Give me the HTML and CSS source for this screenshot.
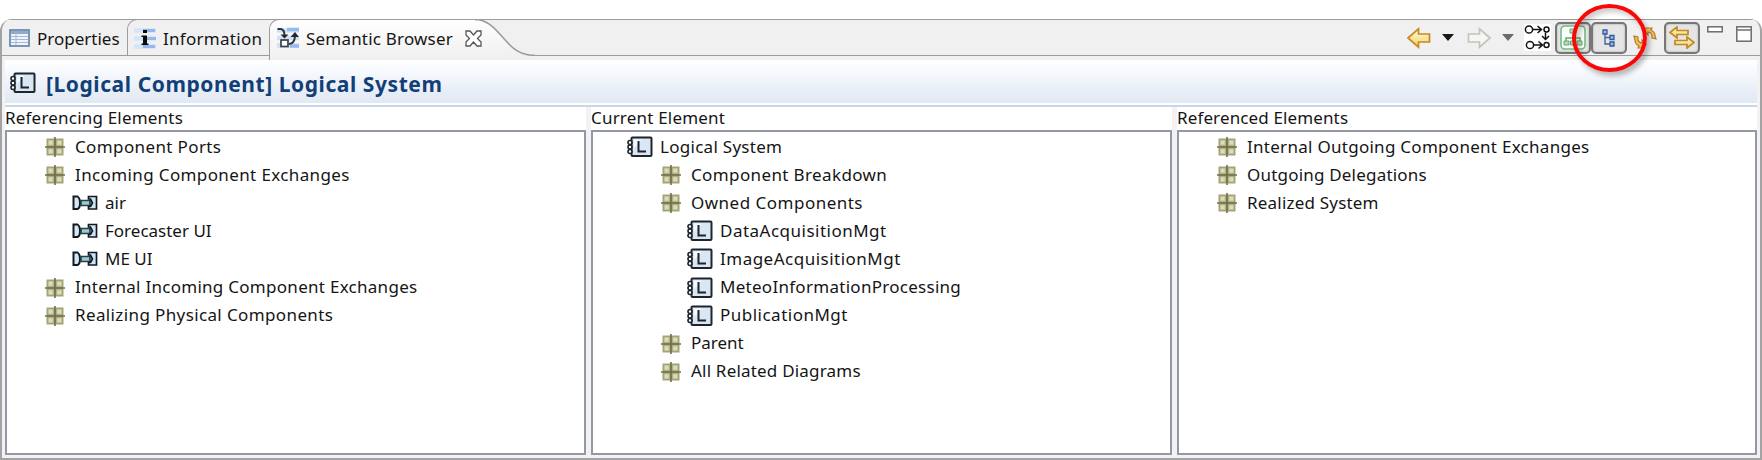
FILE: index.html
```
<!DOCTYPE html>
<html lang="en">
<head>
<meta charset="utf-8">
<title>Semantic Browser</title>
<link rel="stylesheet" href="styles.css">
</head>
<body>
<svg class="defs" width="0" height="0" aria-hidden="true">
  <defs>
    <linearGradient id="gold" x1="0" y1="0" x2="0" y2="1"><stop offset="0" stop-color="#fffbe0"/><stop offset="1" stop-color="#f6cf62"/></linearGradient>
    <linearGradient id="tabfill" x1="0" y1="0" x2="0" y2="1"><stop offset="0" stop-color="#fff"/><stop offset="1" stop-color="#efefef"/></linearGradient>
    <symbol id="grid" viewBox="0 0 20 20">
      <rect x="1.500" y="1.500" width="17" height="17" fill="#a3a37a"/>
      <path d="M3.500 3.500h4.500v4.500h-4.500zM12 3.500h4.500v4.500h-4.500zM3.500 12h4.500v4.500h-4.500zM12 12h4.500v4.500h-4.500z" fill="#dcdcba" stroke="#c3c39a"/>
      <path d="M10 0v20M0 10h20" stroke="#716f48" stroke-width="1.600"/>
    </symbol>
    <symbol id="logical" viewBox="0 0 26 22">
      <rect x="4.500" y="1.500" width="20" height="18.500" rx="1" fill="#d9e6f4" stroke="#1f252c" stroke-width="2"/>
      <path d="M7 12V3.500h8z" fill="#f4f9ff"/>
      <path d="M11.500 5v10.500h7.500" fill="none" stroke="#20242a" stroke-width="2"/>
      <g fill="#fff" stroke="#1f252c" stroke-width="1.600"><circle cx="3" cy="6.500" r="2"/><circle cx="3" cy="11" r="2"/><circle cx="3" cy="15.500" r="2"/></g>
    </symbol>
    <symbol id="exchange" viewBox="0 0 26 16">
      <path d="M1.500 1.500H5.500Q8 3 8 8T5.500 14H1.500z" fill="#d3e7f7" stroke="#121a20" stroke-width="2"/>
      <path d="M9 5.500H18V10.500H9z" fill="#9cc6ea" stroke="#254337" stroke-width="1.700"/>
      <path d="M16.500 1.500H24.500V14H16.500V11.500H18.500L20.500 8 18.500 4H16.500z" fill="#cfe5f7" stroke="#121a20" stroke-width="1.700"/>
    </symbol>
  </defs>
</svg>

<main class="view">
  <header class="tabbar">
    <div class="tab">
      <svg class="ico-prop" width="21" height="18" viewBox="0 0 21 18"><rect x="1" y="1" width="19" height="16" fill="#eef4fa" stroke="#5e7fa6" stroke-width="1.600"/><path d="M1.800 3.500h17.400" stroke="#8fa9c8" stroke-width="3"/><path d="M2 7.500h17M2 10.500h17M2 13.500h17M7 3v13" stroke="#a5bad2"/></svg>
      <span>Properties</span>
    </div>
    <div class="tab second">
      <svg class="ico-info" width="24" height="23" viewBox="0 0 24 23"><path d="M1 3.500h22M1 11.500h22M1 19.500h22" stroke="#d4e4fa" stroke-width="4.500"/><path d="M10 3.500h12M14 11.500h9M10 19.500h12" stroke="#91b8ef" stroke-width="3"/><path d="M10 3h4v3h-4zM8.500 8.500H14v8h1.500v1.500H8.500v-1.500H10V10H8.500z" fill="#090909"/></svg>
      <span class="ls-3">Information</span>
    </div>
    <div class="tab selected">
      <svg class="ico-sem" width="24" height="22" viewBox="0 0 24 22"><path d="M1 3.500h22M1 11h22M1 18.500h22" stroke="#cfe1fa" stroke-width="4.500"/><path d="M11 2.500h12M14 19h9" stroke="#94baf0" stroke-width="3.500"/><path d="M1.500 2h3.500q3.500 1 3.500 6M13 17q5.500-.5 6-7.500" fill="none" stroke="#303438" stroke-width="2"/><path d="M4.500 7.500h8L8.500 11.500zM14.500 10L19 5l4 5z" fill="#24282c"/><rect x="5" y="13" width="7" height="6.500" fill="#fff" stroke="#3a3e42" stroke-width="1.700"/></svg>
      <span class="ls-2">Semantic Browser</span>
      <svg class="ico-close" width="17" height="17" viewBox="0 0 17 17"><path d="M1 1h4l3.500 4L12 1h4v4l-3.500 3.500L16 12v4h-4l-3.500-4L5 16H1v-4l3.500-3.500L1 5z" fill="#fff" stroke="#555" stroke-width="1.300"/></svg>
    </div>
    <svg class="swoosh" width="60" height="41" viewBox="0 0 60 41"><path d="M0 1H4C26 6 30 34 56 36.500H60V41H0z" fill="url(#tabfill)"/><path d="M0 .7H4C27 6 30 34 56 36.300H60" fill="none" stroke="#9c9c9c" stroke-width="1.600"/></svg>
    <div class="toolbar">
      <svg class="arrow" width="24" height="22" viewBox="0 0 24 22"><path d="M1 11L11.500 1.800V7H22.500V15H11.500V20.200z" fill="url(#gold)" stroke="#c58a22" stroke-width="1.700"/></svg>
      <svg class="drop" width="12" height="7"><path d="M0 0h12L6 7z" fill="#171717"/></svg>
      <svg class="arrow fwd" width="24" height="22" viewBox="0 0 24 22"><path d="M23 11L12.500 1.800V7H1.500V15H12.500V20.200z" fill="#f6f6f2" stroke="#c4c3bb" stroke-width="1.700"/></svg>
      <svg class="drop" width="12" height="7"><path d="M0 0h12L6 7z" fill="#686c70"/></svg>
      <svg class="nodes" width="27" height="27" viewBox="0 0 27 27"><rect width="27" height="27" fill="#fff"/><g fill="#fff" stroke="#111" stroke-width="1.500"><circle cx="5" cy="5.500" r="3.600"/><circle cx="22.500" cy="5.500" r="2.500"/><circle cx="6" cy="21" r="3.600"/><circle cx="22.500" cy="21" r="2.500"/><path d="M9 5.500h8.500M13.500 2l4 3.500-4 3.500M21.500 8.500v7M18 12l3.500 3.500L25 12M10 21h8.500M14.500 17.500l4 3.500-4 3.500" fill="none"/></g></svg>
      <span class="button"><svg width="26" height="25" viewBox="0 0 26 25"><rect x="1" y="1" width="24" height="23" rx="4" fill="#f8fff8" stroke="#78b883" stroke-width="1.600"/><path d="M13 8v8M6 16v-3h14v3" fill="none" stroke="#64a770" stroke-width="1.500"/><path d="M10 4h6v4h-6zM4 16h5v4H4zM10.500 16h5v4h-5zM17 16h5v4h-5z" fill="#b2dcb7" stroke="#64a770"/></svg></span>
      <span class="button"><svg width="14" height="18" viewBox="0 0 14 18"><path d="M3 4v11h6M3 8.500h6" fill="none" stroke="#4c6291" stroke-width="1.400"/><g fill="#93bbf2" stroke="#34599d" stroke-width="1.300"><path d="M1 1h4v4H1zM8 6.500h4v4H8zM8 13h4v4H8z"/></g></svg></span>
      <svg class="sync" width="24" height="22" viewBox="0 0 24 22"><g fill="#f0c65c" stroke="#b27a26" stroke-width="1.200"><path d="M1 9l4 1v3q1 3 4 3v-3l4 4-2 4H5l1-2Q2 17 2 13z"/><path d="M23 12l-4-1V8q-1-3-4-3v3l-4-4 2-3h6l-1 2q4 2 4 6z"/></g></svg>
      <span class="button"><svg width="26" height="23" viewBox="0 0 26 23"><g fill="url(#gold)" stroke="#c28a22" stroke-width="1.700"><path d="M1 6.500L8 1v3.500h11v4H8V12z"/><path d="M25 16.500l-7-5.500v3.500H6v4h12V22z"/></g></svg></span>
      <svg class="min" width="16" height="7" viewBox="0 0 16 7"><rect x=".8" y=".8" width="14.400" height="5" fill="#fff" stroke="#6c6c6c" stroke-width="1.500"/></svg>
      <svg class="max" width="16" height="16" viewBox="0 0 16 16"><rect x=".8" y=".8" width="14.400" height="14.400" fill="#fff" stroke="#6c6c6c" stroke-width="1.500"/><path d="M1 4h14" stroke="#6c6c6c" stroke-width="1.500"/></svg>
    </div>
  </header>

  <section class="heading">
    <svg width="26" height="22"><use href="#logical"/></svg>
    <h1>[Logical Component] Logical System</h1>
  </section>

  <div class="columns">
    <section class="column">
      <h2 class="ls-2">Referencing Elements</h2>
      <ul class="tree">
        <li class="category"><svg><use href="#grid"/></svg><span class="ls-4">Component Ports</span></li>
        <li class="category"><svg><use href="#grid"/></svg><span class="ls-4">Incoming Component Exchanges</span></li>
        <li class="link"><svg><use href="#exchange"/></svg><span>air</span></li>
        <li class="link"><svg><use href="#exchange"/></svg><span>Forecaster UI</span></li>
        <li class="link"><svg><use href="#exchange"/></svg><span>ME UI</span></li>
        <li class="category"><svg><use href="#grid"/></svg><span class="ls-3">Internal Incoming Component Exchanges</span></li>
        <li class="category"><svg><use href="#grid"/></svg><span class="ls-4">Realizing Physical Components</span></li>
      </ul>
    </section>
    <section class="column current">
      <h2 class="ls-2">Current Element</h2>
      <ul class="tree">
        <li class="root"><svg><use href="#logical"/></svg><span class="ls-3">Logical System</span></li>
        <li class="category"><svg><use href="#grid"/></svg><span class="ls-4">Component Breakdown</span></li>
        <li class="category"><svg><use href="#grid"/></svg><span class="ls-5">Owned Components</span></li>
        <li class="item"><svg><use href="#logical"/></svg><span class="ls-5">DataAcquisitionMgt</span></li>
        <li class="item"><svg><use href="#logical"/></svg><span class="ls-5">ImageAcquisitionMgt</span></li>
        <li class="item"><svg><use href="#logical"/></svg><span class="ls-3">MeteoInformationProcessing</span></li>
        <li class="item"><svg><use href="#logical"/></svg><span class="ls-5">PublicationMgt</span></li>
        <li class="category"><svg><use href="#grid"/></svg><span>Parent</span></li>
        <li class="category"><svg><use href="#grid"/></svg><span class="ls-2">All Related Diagrams</span></li>
      </ul>
    </section>
    <section class="column">
      <h2 class="ls-1">Referenced Elements</h2>
      <ul class="tree">
        <li class="category"><svg><use href="#grid"/></svg><span class="ls-3">Internal Outgoing Component Exchanges</span></li>
        <li class="category"><svg><use href="#grid"/></svg><span class="ls-2">Outgoing Delegations</span></li>
        <li class="category"><svg><use href="#grid"/></svg><span class="ls-2">Realized System</span></li>
      </ul>
    </section>
  </div>
</main>
<div class="highlight"></div>
</body>
</html>
```
FILE: styles.css
```
* { box-sizing: border-box; }
body { margin: 0; background: #fff; height: 460px; overflow: hidden; padding-top: 19px; font: 17px/28px "Noto Sans", "Open Sans", sans-serif; color: #151515; }
svg { display: block; flex: none; }
.defs { position: absolute; }
.ls-1 { letter-spacing: .13px; }
.ls-2 { letter-spacing: .2px; }
.ls-3 { letter-spacing: .28px; }
.ls-4 { letter-spacing: .38px; }
.ls-5 { letter-spacing: .49px; }
.view { height: 441px; width: 1762px; border: 2px solid #a3a3a3; border-top: 0; border-radius: 12px 12px 0 0; display: flex; flex-direction: column; padding: 0 3px 3px; background: #f2f2f4; overflow: hidden; }
.tabbar { height: 41px; margin: 0 -3px; flex: none; display: flex; align-items: flex-start; background: linear-gradient(#9c9c9c 0 1.500px, transparent 1.500px 35.500px, #9c9c9c 35.500px 37px, #f0f0f0 37px), #f0f0f0; }
.tab { height: 37px; width: 125px; display: flex; align-items: center; padding-left: 7px; white-space: nowrap; }
.tab span { padding-top: 2px; }
.ico-prop { margin-right: 7px; }
.tab.second { width: 142px; border-left: 1.500px solid #9c9c9c; border-top: 1.500px solid #9c9c9c; border-radius: 10px 0 0 0; padding-left: 5px; }
.ico-info { margin-right: 6px; }
.tab.selected { height: 41px; width: 206px; border-left: 1.500px solid #9c9c9c; border-top: 1.500px solid #9c9c9c; border-radius: 10px 0 0 0; background: linear-gradient(#fff, #efefef); padding: 0 0 4px 6px; }
.ico-sem { margin-right: 6px; }
.ico-close { margin-left: 12px; position: relative; z-index: 1; }
.toolbar { margin-left: auto; height: 37px; display: flex; align-items: center; padding-right: 8px; }
.drop { margin: 0 13px 0 11px; }
.nodes { margin-right: 4px; margin-left: -3px; }
.button { width: 36px; height: 32px; border: 2px solid #777; border-radius: 5px; background: #e5e5e5; box-shadow: inset 0 0 2px #999; display: flex; align-items: center; justify-content: center; }
.sync { margin: 0 7px 0 6px; }
.min { margin: 0 13px 17px 8px; }
.max { margin-bottom: 8px; }
.toolbar .sync + .button { margin-right: -1px; }
.heading { height: 47px; flex: none; display: flex; align-items: center; padding: 0 0 2px 5px; background: linear-gradient(#fff, #f6f9fd 25%, #e0e8f3 43px, #fff 43px 45px, #c8d7e8 45px 47px); }
h1 { font: bold 21px/28px "Noto Sans", sans-serif; letter-spacing: .57px; color: #123f78; margin: 0 0 0 10px; padding-top: 3px; white-space: nowrap; }
.columns { flex: 1; display: flex; gap: 5px; min-height: 0; }
.column { width: 581px; display: flex; flex-direction: column; background: #fff; }
.column:last-child { flex: 1; }
h2 { font: inherit; line-height: 22px; height: 23px; margin: 0; flex: none; }
.tree { flex: 1; list-style: none; margin: 0; padding: 1px 0 0 38px; border: 2px solid #9299a4; }
.tree li { height: 28.100px; display: flex; align-items: center; white-space: nowrap; }
.tree span { margin-top: -1px; }
.tree svg { width: 20px; height: 20px; margin-right: 10px; }
.tree .link { padding-left: 27px; }
.tree .link svg { width: 26px; height: 16px; margin-right: 7px; }
.current .tree { padding-left: 34px; }
.current .category { padding-left: 34px; }
.tree .root svg, .tree .item svg { width: 26px; height: 22px; margin-right: 7px; }
.current .item { padding-left: 60px; }
.highlight { position: absolute; left: 1572px; top: 4px; width: 75px; height: 68px; border: 4px solid #f80808; border-radius: 50%; box-shadow: 3px 4px 5px #0004, inset 3px 4px 5px #0003; }
```
